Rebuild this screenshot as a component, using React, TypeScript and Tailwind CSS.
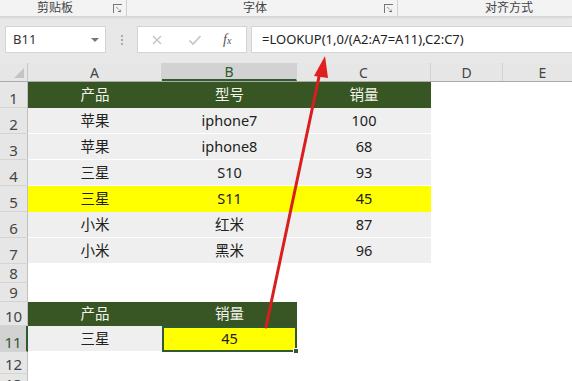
import React from "react";

const FONT = { fontFamily: '"Noto Sans", "Noto Sans CJK SC", sans-serif' };

type Cell = { t?: string; kind: "head" | "data" | "yellow" | "empty" | "sel" };

const COLS = [134, 135, 134, 72, 80];

function CellBox({ c, w, h }: { c: Cell; w: number; h: number }) {
  let cls = "flex items-center justify-center shrink-0 text-[14.5px] ";
  if (c.kind === "head") cls += "bg-[#375623] text-[#f4f4ec]";
  else if (c.kind === "data") cls += "bg-[#efefef] text-[#222] border-b border-white";
  else if (c.kind === "yellow") cls += "bg-[#ffff00] text-[#222]";
  else if (c.kind === "sel") cls += "bg-[#ffff00] text-[#222] border-2 border-[#2f5b2f] relative";
  else cls += "bg-white";
  return (
    <div className={cls} style={{ width: w, height: h }}>
      {c.t}
      {c.kind === "sel" && (
        <div className="absolute -right-[4px] -bottom-[4px] w-[6px] h-[6px] bg-[#2f5b2f] border border-white" />
      )}
    </div>
  );
}

const E: Cell = { kind: "empty" };

const rows: { n: number; h: number; cells: Cell[]; sel?: boolean }[] = [
  { n: 1, h: 26, cells: [{ t: "产品", kind: "head" }, { t: "型号", kind: "head" }, { t: "销量", kind: "head" }, E, E] },
  { n: 2, h: 26, cells: [{ t: "苹果", kind: "data" }, { t: "iphone7", kind: "data" }, { t: "100", kind: "data" }, E, E] },
  { n: 3, h: 26, cells: [{ t: "苹果", kind: "data" }, { t: "iphone8", kind: "data" }, { t: "68", kind: "data" }, E, E] },
  { n: 4, h: 26, cells: [{ t: "三星", kind: "data" }, { t: "S10", kind: "data" }, { t: "93", kind: "data" }, E, E] },
  { n: 5, h: 26, cells: [{ t: "三星", kind: "yellow" }, { t: "S11", kind: "yellow" }, { t: "45", kind: "yellow" }, E, E] },
  { n: 6, h: 26, cells: [{ t: "小米", kind: "data" }, { t: "红米", kind: "data" }, { t: "87", kind: "data" }, E, E] },
  { n: 7, h: 26, cells: [{ t: "小米", kind: "data" }, { t: "黑米", kind: "data" }, { t: "96", kind: "data" }, E, E] },
  { n: 8, h: 19, cells: [E, E, E, E, E] },
  { n: 9, h: 19, cells: [E, E, E, E, E] },
  { n: 10, h: 24, cells: [{ t: "产品", kind: "head" }, { t: "销量", kind: "head" }, E, E, E] },
  { n: 11, h: 26, sel: true, cells: [{ t: "三星", kind: "data" }, { t: "45", kind: "sel" }, E, E, E] },
  { n: 12, h: 22, cells: [E, E, E, E, E] },
  { n: 13, h: 20, cells: [E, E, E, E, E] },
];

export default function App() {
  return (
    <div className="relative w-[572px] h-[381px] overflow-hidden bg-[#e8e8e8]" style={FONT}>
      {/* Ribbon bottom */}
      <div className="h-[17px] bg-[#f3f3f3] border-b border-[#d6d6d6] flex text-[12px] leading-[14px] text-[#444] shadow-[0_1px_2px_rgba(0,0,0,0.08)]">
        <div className="w-[127px] flex items-start pt-[1px] border-r border-[#d0d0d0]">
          <span className="ml-[37px]">剪贴板</span>
          <span className="ml-auto mr-[4px] mt-[3px] w-[9px] h-[9px] border-l border-t border-[#777] text-[7px] leading-[7px] text-[#555] flex items-end justify-end">↘</span>
        </div>
        <div className="w-[271px] flex items-start pt-[1px] border-r border-[#d0d0d0]">
          <span className="ml-[116px]">字体</span>
          <span className="ml-auto mr-[4px] mt-[3px] w-[9px] h-[9px] border-l border-t border-[#777] text-[7px] leading-[7px] text-[#555] flex items-end justify-end">↘</span>
        </div>
        <div className="flex-1 flex items-start pt-[1px]">
          <span className="ml-[87px]">对齐方式</span>
        </div>
      </div>

      {/* Formula bar */}
      <div className="mt-[9px] h-[27px] flex items-stretch">
        <div className="ml-[5px] w-[101px] bg-white border border-[#d4d4d4] flex items-center text-[13px] text-[#333]">
          <span className="ml-[7px]">B11</span>
          <span className="ml-auto mr-[6px] w-0 h-0 border-l-[4px] border-r-[4px] border-t-[4px] border-l-transparent border-r-transparent border-t-[#777]" />
        </div>
        <div className="w-[31px] flex flex-col items-center justify-center gap-[2px]">
          <div className="w-[2px] h-[2px] bg-[#aaa]" />
          <div className="w-[2px] h-[2px] bg-[#aaa]" />
          <div className="w-[2px] h-[2px] bg-[#aaa]" />
        </div>
        <div className="w-[110px] bg-white border border-[#d4d4d4] flex items-center">
          <svg width="12" height="12" viewBox="0 0 12 12" className="ml-[13px]">
            <path d="M2 2 L10 10 M10 2 L2 10" stroke="#c4c4c4" strokeWidth="1.4" />
          </svg>
          <svg width="14" height="12" viewBox="0 0 14 12" className="ml-[25px]">
            <path d="M1.5 6.5 L5 10 L12.5 2" stroke="#c4c4c4" strokeWidth="1.6" fill="none" />
          </svg>
          <span className="ml-[21px] text-[14px] italic text-[#555]" style={{ fontFamily: '"Liberation Serif", serif' }}>
            f<span className="text-[10px]">x</span>
          </span>
        </div>
        <div className="ml-[4px] flex-1 bg-white border border-[#d4d4d4] border-r-0 flex items-center text-[13px] text-[#222]">
          <span className="ml-[10px]">=LOOKUP(1,0/(A2:A7=A11),C2:C7)</span>
        </div>
      </div>

      {/* Sheet */}
      <div className="mt-[10px] bg-white">
        {/* Column headers */}
        <div className="flex h-[19px] border-b border-[#ababab] bg-[#e6e6e6] text-[14px] text-[#444]">
          <div className="w-[28px] shrink-0 border-r border-[#c8c8c8] flex items-end justify-end">
            <div className="w-0 h-0 mr-[3px] mb-[3px]" style={{ borderBottom: "10px solid #c4c4c4", borderLeft: "10px solid transparent" }} />
          </div>
          {["A", "B", "C", "D", "E"].map((l, i) => (
            <div
              key={l}
              className={
                "shrink-0 flex items-center justify-center border-r border-[#d2d2d2] " +
                (l === "B" ? "bg-[#d2d2d2] text-[#2f5b2f] border-b-2 border-b-[#2f5b2f]" : "")
              }
              style={{ width: COLS[i] }}
            >
              {l}
            </div>
          ))}
        </div>
        {rows.map((r) => (
          <div key={r.n} className="flex" style={{ height: r.h }}>
            <div
              className={
                "w-[28px] shrink-0 flex items-end justify-center pb-[1px] text-[15px] leading-none border-b border-[#d4d4d4] " +
                (r.sel
                  ? "bg-[#d2d2d2] text-[#2f5b2f] border-r-2 border-r-[#2f5b2f]"
                  : "bg-[#e6e6e6] text-[#444] border-r border-r-[#c0c0c0]")
              }
            >
              {r.n}
            </div>
            {r.cells.map((c, i) => (
              <CellBox key={i} c={c} w={COLS[i]} h={r.h} />
            ))}
          </div>
        ))}
      </div>

      {/* Red arrow overlay */}
      <svg className="absolute left-0 top-0 pointer-events-none" width="572" height="381" viewBox="0 0 572 381">
        <line x1="266" y1="327" x2="320" y2="72" stroke="#d81e1e" strokeWidth="3" strokeLinecap="round" />
        <polygon points="325,56 314,76 328,78" fill="#e01f1f" />
      </svg>
    </div>
  );
}
